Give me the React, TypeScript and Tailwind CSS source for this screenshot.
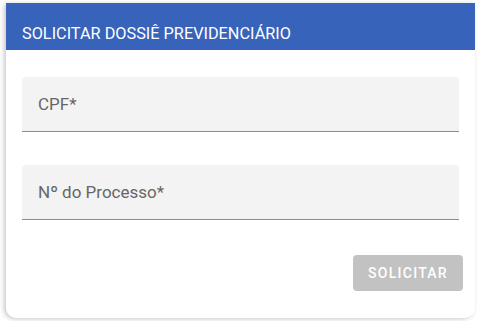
export default function App() {
  return (
    <div className="w-[483px] h-[321px] bg-white pt-[3px] pl-[6px] pr-[8px] pb-[3px] font-['Roboto',sans-serif]">
      <div className="h-full flex flex-col bg-white rounded-b-[10px] shadow-[-2px_1px_5px_rgba(0,0,0,0.22)]">
        <div className="h-[47px] bg-[#3763bb] flex items-end pb-[8px] pl-[16px] text-white text-[16.3px] leading-none">
          SOLICITAR DOSSIÊ PREVIDENCIÁRIO
        </div>
        <div className="flex flex-col px-[16px] pt-[27px]">
          <div className="h-[55px] bg-[#f3f3f3] rounded-t-[4px] border-b border-[#8c8c8c] flex items-center pl-[16px] pt-[1px] text-[17px] text-[#666666]">
            CPF*
          </div>
          <div className="h-[55px] mt-[33px] bg-[#f3f3f3] rounded-t-[4px] border-b border-[#8c8c8c] flex items-center pl-[16px] pt-[1px] text-[17px] text-[#666666]">
            Nº do Processo*
          </div>
          <div className="flex justify-end mt-[35px]">
            <button className="w-[110px] h-[36px] mr-[-4px] rounded-[4px] bg-[#c2c2c2] text-white text-[14px] font-medium tracking-[1.25px]">
              SOLICITAR
            </button>
          </div>
        </div>
      </div>
    </div>
  );
}
